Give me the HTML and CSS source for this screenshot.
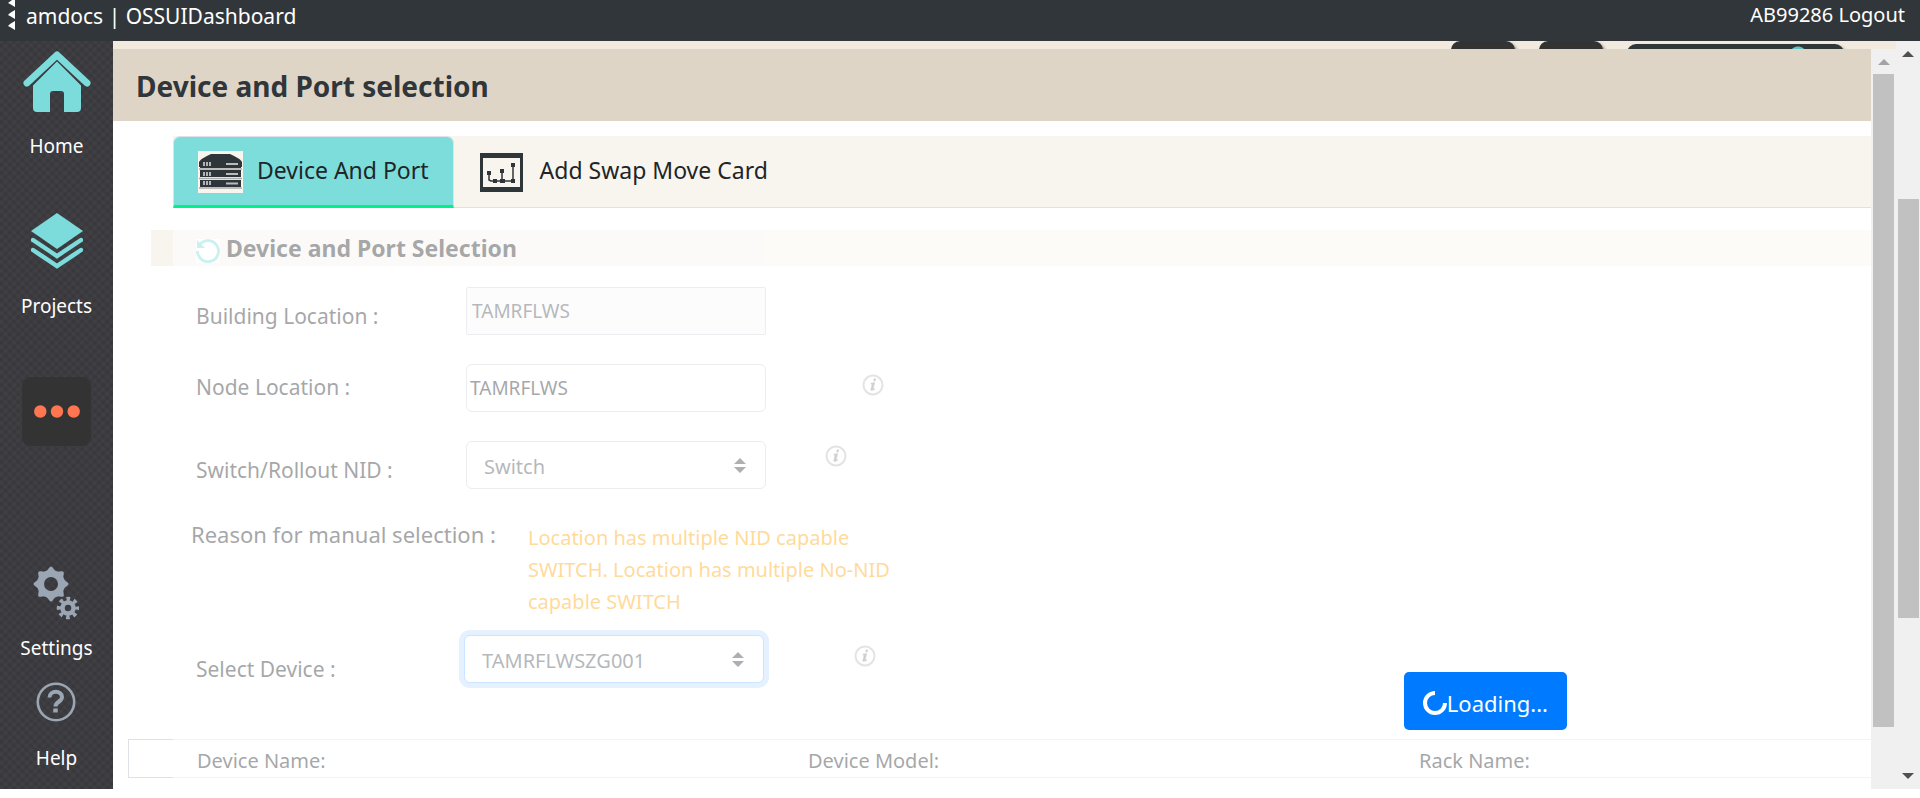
FILE: index.html
```html
<!DOCTYPE html>
<html lang="en">
<head>
<meta charset="utf-8">
<title>OSSUIDashboard</title>
<link rel="stylesheet" href="styles.css">
</head>
<body>
<svg class="defs" aria-hidden="true">
  <symbol id="info" viewBox="0 0 22 22">
    <circle cx="11" cy="11" r="9.5" fill="none" stroke="#bbb" stroke-width="2"/>
    <path d="M12.2 4.8h1.6l-.6 2.2h-1.6zM9 9.2l3.7-.6-1.6 6.4 1.6-.4-.3 1-2.8.9-.9-.6 1.5-5.8-1.3.1z" fill="#8a8a8a" stroke="#8a8a8a" stroke-width=".5"/>
  </symbol>
</svg>
<header class="topbar">
  <div class="brand">
    <svg class="brand-mark" width="7" height="30" viewBox="0 0 7 30" fill="#fff"><path d="M7 0v7L2 4 0 3l4-3zM7 10v9l-5-3-2-1 2-2zM7 21v9l-5-3-2-1 2-2z"/></svg>
    <span>amdocs | OSSUIDashboard</span>
  </div>
  <a class="logout" href="#">AB99286 Logout</a>
</header>
<div class="shell">
  <nav class="sidebar">
    <a class="nav-item nav-home" href="#">
      <svg width="68" height="61" viewBox="0 0 68 61"><path d="M34 8 58 32v25q0 4-4 4H41V43q0-3-3-3h-8q-3 0-3 3v18H14q-4 0-4-4V32z" fill="#7cdcdb"/><path d="M9 34 34 9l25 25" fill="none" stroke="#3c3b40" stroke-width="2"/><path d="M4 32 34 4l30 28" fill="none" stroke="#7cdcdb" stroke-width="7" stroke-linecap="round" stroke-linejoin="round"/></svg>
      <span>Home</span>
    </a>
    <a class="nav-item nav-projects" href="#">
      <svg width="52" height="56" viewBox="0 0 52 56"><path d="M26 0 52 18 26 36 0 18z" fill="#7cdcdb"/><path d="M2 27 26 43 50 27M2 37 26 53 50 37" fill="none" stroke="#7cdcdb" stroke-width="4.5" stroke-linecap="round"/></svg>
      <span>Projects</span>
    </a>
    <button class="more" type="button" aria-label="More">
      <svg width="46" height="13" viewBox="0 0 46 13" fill="#ff7650"><circle cx="6.3" cy="6.5" r="6.2"/><circle cx="23" cy="6.5" r="6.2"/><circle cx="39.7" cy="6.5" r="6.2"/></svg>
    </button>
    <a class="nav-item nav-settings" href="#">
      <svg width="46" height="54" viewBox="0 0 46 54" fill="none" stroke="#9ba6b5">
        <circle cx="18" cy="18" r="10.5" stroke-width="7"/>
        <g fill="#9ba6b5" stroke="none"><path id="cog" d="M13 6 16 2q2-3 4 0l3 4z"/><use href="#cog" transform="rotate(45 18 18)"/><use href="#cog" transform="rotate(90 18 18)"/><use href="#cog" transform="rotate(135 18 18)"/><use href="#cog" transform="rotate(180 18 18)"/><use href="#cog" transform="rotate(225 18 18)"/><use href="#cog" transform="rotate(270 18 18)"/><use href="#cog" transform="rotate(315 18 18)"/></g>
        <circle cx="35" cy="42" r="5.5" stroke-width="4.5"/>
        <circle cx="35" cy="42" r="9" stroke-width="4.5" stroke-dasharray="3.5 3.57" stroke-dashoffset="1.75"/>
      </svg>
      <span>Settings</span>
    </a>
    <a class="nav-item nav-help" href="#">
      <svg width="40" height="40" viewBox="0 0 40 40" fill="none" stroke="#9ba6b5"><circle cx="20" cy="20" r="18.2" stroke-width="2.6"/><path d="M13.5 15.5c0-7.500 12.500-7.500 12.500-.5 0 5-6.500 4.500-6.500 9.500" stroke-width="4"/><path d="M19.500 26.500v4" stroke-width="4.500"/></svg>
      <span>Help</span>
    </a>
  </nav>
  <div class="workspace">
    <div class="peek"><i class="peek-tab"></i><i class="peek-tab"></i><i class="peek-wide"></i></div>
    <div class="panel-wrap">
      <main class="panel">
        <h1 class="title">Device and Port selection</h1>
        <div class="tabs" role="tablist">
          <button class="tab tab-active" type="button" role="tab" aria-selected="true">
            <svg width="45" height="42" viewBox="0 0 45 42"><path d="M0 0h45v42H0z" fill="#f8f5ee"/><path d="M1 16V11Q2 8 13 3h19q11 5 12 8v5z" fill="#2f363a"/><path d="M2 10h41v7H2zM2 19h41v7H2zM2 29h41v7H2z" fill="#2f363a"/><path d="M1 18h43M1 27.500h43M1 37h43" stroke="#aaa" stroke-width="1.500"/><path d="M6 11v4M9 11v4M12 11v4M6 21v4M9 21v4M12 21v4M6 30v4M9 30v4M12 30v4" stroke="#ddd" stroke-width="1.500"/><path d="M28 13h12M28 23h12M28 32.500h12" stroke="#bbb" stroke-width="2.200"/></svg>
            <span>Device And Port</span>
          </button>
          <button class="tab" type="button" role="tab" aria-selected="false">
            <svg width="43" height="39" viewBox="0 0 43 39" fill="#2f363a"><path fill-rule="evenodd" d="M0 0h43v39H0zM3 5v29h37V5z"/><path d="M7 18h4v4H7zM20 16h4v4h-4zM31 10h4v4h-4zM13 26h4v4h-4zM20 26h5v4h-5zM31 26h4v4h-4z"/><path d="M9 20v7l2 1h22V12M22 18v10" fill="none" stroke="#2f363a" stroke-width="1.500"/></svg>
            <span>Add Swap Move Card</span>
          </button>
        </div>
        <div class="section-head">
          <h2 class="faded">
            <svg width="24" height="24" viewBox="0 0 24 24"><path d="M0 0h24v24H0z" fill="#fff"/><path d="M3.500 6A10.500 10.500 0 1 1 1.500 12" fill="none" stroke="#7cdcdb" stroke-width="2.800"/><path d="M1 1v8h8z" fill="#7cdcdb"/></svg>
            Device and Port Selection
          </h2>
        </div>
        <form class="form faded">
          <div class="row">
            <label class="label-low" for="building">Building Location :</label>
            <input id="building" class="field field-disabled" value="TAMRFLWS" disabled>
          </div>
          <div class="row">
            <label for="node">Node Location :</label>
            <input id="node" class="field" value="TAMRFLWS">
            <svg class="info info-far"><use href="#info"/></svg>
          </div>
          <div class="row">
            <label class="label-low" for="nid">Switch/Rollout NID :</label>
            <div class="select"><select id="nid" class="field"><option>Switch</option></select><svg width="12" height="15" viewBox="0 0 12 15"><path d="M0 6 6 0l6 6zM0 9l6 6 6-6z" fill="#343a40"/></svg></div>
            <svg class="info info-near"><use href="#info"/></svg>
          </div>
          <div class="row row-reason">
            <span class="reason-label">Reason for manual selection :</span>
            <p class="reason">Location has multiple NID capable SWITCH. Location has multiple No-NID capable SWITCH</p>
          </div>
          <div class="row row-device">
            <label class="label-lowest" for="device">Select Device :</label>
            <div class="select select-focus"><select id="device" class="field"><option>TAMRFLWSZG001</option></select><svg width="12" height="15" viewBox="0 0 12 15"><path d="M0 6 6 0l6 6zM0 9l6 6 6-6z" fill="#343a40"/></svg></div>
            <svg class="info info-mid"><use href="#info"/></svg>
          </div>
        </form>
        <div class="details">
          <div class="stub"></div>
          <div class="cells faded"><span>Device Name:</span><span>Device Model:</span><span>Rack Name:</span></div>
        </div>
        <button class="loading" type="button"><svg width="24" height="24" viewBox="0 0 24 24"><path d="M12 2A10 10 0 1 0 22 12" fill="none" stroke="#fff" stroke-width="4"/></svg>Loading...</button>
      </main>
      <div class="scroll scroll-inner"><i class="arrow arrow-up arrow-dim"></i><div class="thumb"></div></div>
    </div>
  </div>
  <div class="scroll scroll-outer"><i class="arrow arrow-up"></i><div class="thumb"></div><i class="arrow arrow-down"></i></div>
</div>
</body>
</html>
```
FILE: styles.css
```css
* { box-sizing: border-box; }
body {
  margin: 0;
  height: 100vh;
  display: flex;
  flex-direction: column;
  padding-bottom: 9px;
  overflow: hidden;
  background: #fff;
  color: #212529;
  font-family: "Noto Sans", "Open Sans", sans-serif;
  font-size: 20px;
}
h1, h2, p { margin: 0; }
a { color: inherit; text-decoration: none; }
button { border: 0; padding: 0; font: inherit; color: inherit; background: none; }
svg { display: block; flex: none; }
.defs { position: absolute; width: 0; height: 0; }

.topbar {
  flex: none;
  display: flex;
  justify-content: space-between;
  height: 41px;
  padding: 0 15px 0 8px;
  background: #31363a;
  color: #fff;
  line-height: 32px;
}
.brand { display: flex; gap: 11px; font-size: 21px; }
.logout { line-height: 30px; }

.shell { flex: 1; min-height: 0; display: flex; }
.sidebar {
  flex: none;
  width: 113px;
  display: flex;
  flex-direction: column;
  align-items: center;
  padding-top: 10px;
  color: #fff;
  background:
    repeating-linear-gradient(45deg, transparent 0 3px, rgba(0, 0, 0, .06) 3px 6px),
    repeating-linear-gradient(-45deg, transparent 0 3px, rgba(0, 0, 0, .06) 3px 6px),
    #403f44;
}
.nav-item {
  display: flex;
  flex-direction: column;
  align-items: center;
  font-size: 19px;
  line-height: 28px;
}
.nav-home { gap: 20px; }
.nav-projects { gap: 23px; margin-top: 53px; }
.more {
  display: grid;
  place-items: center;
  width: 69px;
  height: 69px;
  margin-top: 57px;
  border-radius: 9px;
  background: #333;
}
.nav-settings { gap: 14px; margin-top: auto; }
.nav-help { gap: 22px; margin-top: 20px; padding-bottom: 17px; }

.workspace { flex: 1; min-width: 0; display: flex; flex-direction: column; background: #f2e9df; }
.peek {
  flex: none;
  height: 8px;
  display: flex;
  justify-content: flex-end;
  padding-right: 52px;
  overflow: hidden;
}
.peek i { height: 30px; border-radius: 9px; background: #333; box-shadow: 2px 2px 3px #0006; }
.peek-tab { width: 64px; margin-right: 24px; }
.peek .peek-wide {
  width: 217px;
  margin-top: 3px;
  background: radial-gradient(circle at 171px 11px, #5fc4c4 8px, transparent 9px), #2f363a;
}
.panel-wrap { flex: 1; min-height: 0; display: flex; }
.panel { position: relative; flex: 1; min-width: 0; overflow: hidden; background: #fff; }
.title {
  height: 72px;
  padding: 0 23px;
  background: #dfd5c6;
  color: #31363a;
  font-size: 28px;
  font-weight: 700;
  line-height: 74px;
}
.tabs {
  display: flex;
  height: 72px;
  margin: 15px 0 22px 60px;
  background: #f8f5ee;
  box-shadow: inset 0 -1px #dee2e6;
  font-size: 23px;
}
.tab { display: flex; align-items: center; gap: 17px; padding: 0 26px; }
.tab span { padding-bottom: 5px; }
.tab-active {
  gap: 14px;
  padding: 2px 24px 0;
  border: 1px solid #dee2e6;
  border-bottom: 3px solid #00f08c;
  border-radius: 7px 7px 0 0;
  background: #7ddddb;
}
.faded { opacity: .4; }
.section-head { margin-left: 38px; padding-left: 22px; background: linear-gradient(90deg, #f8f5ee 22px, #fff 22px); }
.section-head h2 {
  display: flex;
  align-items: center;
  gap: 6px;
  padding-left: 23px;
  background: #f8f5ee;
  font-size: 23px;
  font-weight: 700;
  line-height: 36px;
}
.section-head svg { margin-top: 6px; }
.form { padding: 21px 0 0 83px; }
.row { display: flex; align-items: flex-start; margin-bottom: 29px; }
.row label { width: 270px; margin-top: 9px; font-size: 21px; line-height: 28px; }
.row .label-low { margin-top: 15px; }
.row .label-lowest { width: 268px; margin-top: 20px; }
.field {
  width: 300px;
  height: 48px;
  padding: 0 3px;
  border: 1px solid #ced4da;
  border-radius: 6px;
  background: #fff;
  color: #212529;
  font: 19px "Noto Sans", sans-serif;
}
.field-disabled { padding: 0 5px; border-radius: 2px; background: #f8f8f8; color: #495057; }
.select { position: relative; }
.select .field { display: block; appearance: none; padding: 2px 17px 0; color: #495057; font-size: 20px; }
.select svg { position: absolute; right: 20px; top: 17px; pointer-events: none; }
.select-focus .field { border-color: #80bdff; box-shadow: 0 0 0 5px #bfdeff; }
.info { width: 22px; height: 22px; margin-top: 10px; }
.info-far { margin-left: 96px; }
.info-mid { margin-left: 90px; }
.info-near { margin-top: 4px; margin-left: 59px; }
.row-reason { margin: 0 0 17px -5px; gap: 27px; line-height: 32px; }
.reason-label { width: 310px; font-size: 22px; }
.reason { width: 370px; padding-top: 4px; color: #ffa500; }
.row-device { margin-bottom: 56px; }
.details { display: flex; height: 39px; margin-left: 15px; }
.stub { width: 45px; border: 1px solid #dee2e6; border-right: 0; }
.cells {
  flex: 1;
  display: grid;
  grid-template-columns: 611px 611px 1fr;
  padding-left: 24px;
  border: solid #dee2e6;
  border-width: 1px 0;
  line-height: 42px;
}
.loading {
  position: absolute;
  right: 304px;
  top: 623px;
  display: flex;
  align-items: center;
  height: 58px;
  padding: 4px 19px 0;
  border-radius: 5px;
  background: #007bff;
  color: #fff;
  font-size: 22px;
}
.scroll { flex: none; display: flex; flex-direction: column; align-items: center; background: #f0f0f0; }
.scroll-inner { width: 25px; padding-top: 10px; }
.scroll-outer { width: 24px; padding: 10px 0; }
.arrow { border: 6px solid transparent; border-width: 0 6px 6px; border-bottom-color: #505050; }
.arrow-dim { border-bottom-color: #a3a3a3; }
.arrow-down { margin-top: auto; border-width: 6px 6px 0; border-top-color: #505050; }
.thumb { width: 21px; background: #c1c1c1; }
.scroll-inner .thumb { height: 89.5%; margin-top: 9px; }
.scroll-outer .thumb { height: 57.5%; margin-top: 142px; }
```
